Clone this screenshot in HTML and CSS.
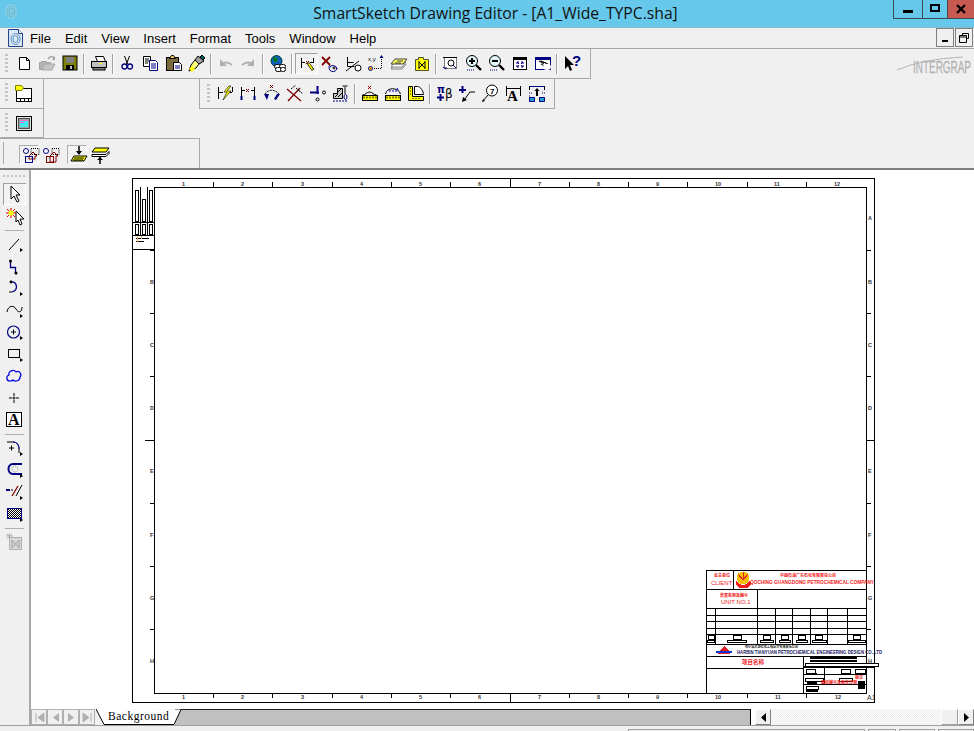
FILE: index.html
```html
<!DOCTYPE html>
<html lang="en">
<head>
<meta charset="utf-8">
<title>SmartSketch Drawing Editor</title>
<link rel="stylesheet" href="styles.css">
</head>
<body>
<div class="app">
  <header class="titlebar">
    <svg class="title-icon" width="14" height="17" viewBox="0 0 14 17"><ellipse cx="7" cy="8.5" rx="6" ry="7.5" fill="#8fd0e4"/><ellipse cx="7" cy="8.5" rx="4" ry="5.5" fill="none" stroke="#5fb4d0"/><ellipse cx="7" cy="8.5" rx="2" ry="3.5" fill="none" stroke="#5fb4d0"/></svg>
    <div class="title-text">SmartSketch Drawing Editor - [A1_Wide_TYPC.sha]</div>
    <div class="win-controls">
      <div class="win-btn win-min"><svg width="12" height="12" viewBox="0 0 12 12"><rect x="1" y="7" width="10" height="3" fill="#000"/></svg></div>
      <div class="win-btn win-max"><svg width="12" height="12" viewBox="0 0 12 12"><rect x="2" y="2" width="8" height="6" fill="none" stroke="#000" stroke-width="2"/></svg></div>
      <div class="win-btn win-close"><svg width="12" height="12" viewBox="0 0 12 12"><path d="M2 2l8 8M10 2l-8 8" stroke="#000" stroke-width="2.4"/></svg></div>
    </div>
  </header>

  <nav class="menubar">
    <svg class="menu-icon" width="15" height="18" viewBox="0 0 15 18"><path d="M.5.5h10l4 4v13H.5z" fill="#dbe9f5" stroke="#1f3f8f"/><path d="M10.500.5v4h4" fill="#fff" stroke="#1f3f8f"/><ellipse cx="7.500" cy="10" rx="4.500" ry="5.500" fill="none" stroke="#5c8fc0"/><ellipse cx="7.500" cy="10" rx="2.500" ry="3.500" fill="none" stroke="#5c8fc0"/></svg>
    <span class="menu-item">File</span>
    <span class="menu-item">Edit</span>
    <span class="menu-item">View</span>
    <span class="menu-item">Insert</span>
    <span class="menu-item">Format</span>
    <span class="menu-item">Tools</span>
    <span class="menu-item">Window</span>
    <span class="menu-item">Help</span>
    <div class="mdi-controls">
      <div class="mdi-btn"><svg width="10" height="10" viewBox="0 0 10 10"><rect x="2" y="7" width="6" height="2" fill="#000"/></svg></div>
      <div class="mdi-btn"><svg width="12" height="12" viewBox="0 0 12 12"><path d="M4.500 3.500v-2h6v5h-2M1.500 3.500h7v7h-7zM1.500 5h7" fill="none" stroke="#000"/></svg></div>
    </div>
  </nav>

  <section class="dock">
    <div class="dock-row row-one">
      <div class="toolbar tb-main">
        <i class="gripper"></i>
        <div class="tool"><svg class="ic" viewBox="0 0 21 21"><path d="M6.500 4.500h7l3 3v9h-10z" fill="#fff" stroke="#000"/><path d="M13.500 4.500v3h3" fill="none" stroke="#000"/></svg></div>
        <div class="tool"><svg class="ic" viewBox="0 0 21 21"><path d="M3.500 9.500h2v-1h5v1h4v7h-11z" fill="#b4b4b4" stroke="#a0a0a0"/><path d="M6 17l3-6h10l-3 6z" fill="#c4c4c4" stroke="#a8a8a8"/><path d="M12 6c2-3 4-3 6-1" fill="none" stroke="#a0a0a0" stroke-width="1.500"/><path d="M19 3v4h-3z" fill="#a0a0a0"/></svg></div>
        <div class="tool"><svg class="ic" viewBox="0 0 21 21"><rect x="4" y="3" width="14" height="14" fill="#808000" stroke="#000"/><rect x="7" y="4" width="8" height="6" fill="#808080"/><rect x="7" y="12" width="8" height="5" fill="#000"/><rect x="11" y="13" width="2" height="3" fill="#c0c0c0"/></svg></div>
        <i class="tool-sep"></i>
        <div class="tool"><svg class="ic" viewBox="0 0 21 21"><path d="M7.500 3.500h8l2 5h-8z" fill="#fff" stroke="#000"/><rect x="3.500" y="8.500" width="15" height="6" fill="#c0c0c0" stroke="#000"/><rect x="5" y="14.500" width="12" height="2.500" fill="#808080" stroke="#000"/><rect x="11" y="10" width="3" height="1" fill="#ff0"/></svg></div>
        <i class="tool-sep"></i>
        <div class="tool"><svg class="ic" viewBox="0 0 21 21"><path d="M7.500 3l3 8M12.500 3l-3 8" stroke="#000" fill="none"/><circle cx="7.500" cy="13.500" r="2.500" fill="none" stroke="#000080" stroke-width="1.300"/><circle cx="13" cy="13.500" r="2.500" fill="none" stroke="#000080" stroke-width="1.300"/></svg></div>
        <div class="tool"><svg class="ic" viewBox="0 0 21 21"><path d="M3.500 3.500h7v10h-7z" fill="#fff" stroke="#000"/><path d="M5 6h4M5 8h4M5 10h3" stroke="#000"/><path d="M9.500 7.500h6l2 2v8h-8z" fill="#fff" stroke="#000080"/><path d="M11 11h5M11 13h5M11 15h5" stroke="#000080"/></svg></div>
        <div class="tool"><svg class="ic" viewBox="0 0 21 21"><rect x="3.500" y="4.500" width="12" height="13" fill="#7a6c3c" stroke="#000"/><path d="M6.500 5.500l2-3h2l2 3z" fill="#f0d060" stroke="#000"/><path d="M10.500 9.500h6l2 2v6h-8z" fill="#fff" stroke="#000"/><path d="M12 13h5M12 15h5" stroke="#000080"/></svg></div>
        <div class="tool"><svg class="ic" viewBox="0 0 21 21"><path d="M12 3l6 5-5 3-4-4z" fill="#a0a0a0" stroke="#000"/><path d="M16 2l3 3-2 2-3-3z" fill="#006060" stroke="#000"/><path d="M9 7l4 4-3 4-7 3 2-6z" fill="#ffff80" stroke="#000"/><path d="M3 16l3 3 3-3-3-3z" fill="#ff0"/></svg></div>
        <i class="tool-sep"></i>
        <div class="tool"><svg class="ic" viewBox="0 0 21 21"><path d="M6 13c2-4 6-5 11-1" fill="none" stroke="#b0b0b0" stroke-width="2"/><path d="M5 6v7h7z" fill="#b0b0b0"/></svg></div>
        <div class="tool"><svg class="ic" viewBox="0 0 21 21"><path d="M15 13c-2-4-6-5-11-1" fill="none" stroke="#b0b0b0" stroke-width="2"/><path d="M16 6v7H9z" fill="#b0b0b0"/></svg></div>
        <i class="tool-sep"></i>
        <div class="tool"><svg class="ic" viewBox="0 0 21 21"><circle cx="9.500" cy="8" r="5.500" fill="#1060c0" stroke="#004040"/><path d="M6 5l3-1 2 3-3 3z" fill="#008000"/><rect x="7.500" y="11.500" width="6" height="4" rx="2" fill="#fff" stroke="#000"/><rect x="12.500" y="11.500" width="6" height="4" rx="2" fill="#fff" stroke="#000"/><rect x="8.500" y="14.500" width="6" height="4" rx="2" fill="#fff" stroke="#000"/><rect x="13.500" y="14.500" width="5" height="4" rx="2" fill="#fff" stroke="#000"/></svg></div>
        <i class="tool-sep"></i>
        <div class="tool tool-on"><svg class="ic" viewBox="0 0 21 21"><path d="M5.500 5v10M17.500 5v5M6 9.500h3M14 9.500h3" stroke="#000" fill="none"/><path d="M10 8l3 3M13 8l-3 3" stroke="#800000"/><path d="M12 10l5 7" stroke="#000" stroke-width="3"/><path d="M12.500 10.500l4 6" stroke="#ff0" stroke-width="1.500"/></svg></div>
        <div class="tool"><svg class="ic" viewBox="0 0 21 21"><path d="M3 4l8 8M11 4l-8 8" stroke="#800000" stroke-width="1.800"/><path d="M11 12a4 4 0 1 0 7 3M18 16a4 4 0 0 0-7-2" fill="none" stroke="#000080"/><path d="M13.500 15h3M15 13.500v3" stroke="#000"/></svg></div>
        <div class="tool"><svg class="ic" viewBox="0 0 21 21"><path d="M5.500 4v9.500h7" fill="none" stroke="#000"/><path d="M5.500 9.500h6" fill="none" stroke="#000"/><path d="M4 18L17 8" stroke="#000"/><circle cx="16" cy="15" r="3" fill="#fff" stroke="#000"/></svg></div>
        <div class="tool"><svg class="ic" viewBox="0 0 21 21"><text class="ic-mini" x="3" y="8">x,y</text><path d="M16.500 4v11" stroke="#000" stroke-dasharray="1 1"/><path d="M9 15.500h7" stroke="#000" stroke-dasharray="1 1"/><path d="M14.500 5l2-3 2 3z" fill="#000080"/><circle cx="5.500" cy="15.500" r="2" fill="#ff0" stroke="#000080"/><circle cx="5.500" cy="15.500" r=".8" fill="#c00"/></svg></div>
        <div class="tool"><svg class="ic" viewBox="0 0 21 21"><path d="M3 16l4-5h11l-4 5z" fill="none" stroke="#808080"/><path d="M3 14l4-5h11l-4 5z" fill="#fff" stroke="#808080"/><path d="M3 11l4-5h12l-4 5z" fill="#ffff60" stroke="#404040"/><path d="M9 8h6M7 10h6" stroke="#404040"/></svg></div>
        <div class="tool"><svg class="ic" viewBox="0 0 21 21"><path d="M4.500 6.500h3v-2h5v2h5v11h-13z" fill="#ff0" stroke="#505020"/><path d="M8 9l6 6M14 9l-6 6M8 8v8M14 8v8" stroke="#000" fill="none"/></svg></div>
        <i class="tool-sep"></i>
        <div class="tool"><svg class="ic" viewBox="0 0 21 21"><path d="M4.500 4.500h12v11h-12z" fill="#fff" stroke="#000" stroke-dasharray="1 1"/><path d="M3 4.500h14" stroke="#000"/><circle cx="11" cy="10" r="3" fill="none" stroke="#000"/><path d="M13 12l3 3M3 14l3 2 0-2" stroke="#000080" fill="none"/></svg></div>
        <div class="tool"><svg class="ic" viewBox="0 0 21 21"><circle cx="9" cy="8" r="5.500" fill="#e0f8f8" stroke="#000"/><path d="M6 8h6M9 5v6" stroke="#000" stroke-width="2"/><path d="M13 12l5 5" stroke="#000" stroke-width="2.400"/><path d="M4 17h8" stroke="#000080" stroke-dasharray="1 1"/></svg></div>
        <div class="tool"><svg class="ic" viewBox="0 0 21 21"><circle cx="9" cy="8" r="5.500" fill="#e0f8f8" stroke="#000"/><path d="M6 8h6" stroke="#000" stroke-width="2"/><path d="M13 12l5 5" stroke="#000" stroke-width="2.400"/><path d="M4 17h8" stroke="#000080" stroke-dasharray="1 1"/></svg></div>
        <div class="tool"><svg class="ic" viewBox="0 0 21 21"><rect x="4.500" y="4.500" width="13" height="12" fill="#fff" stroke="#000"/><path d="M4.500 6h13" stroke="#000" stroke-width="2"/><path d="M8 9l2 2M14 9l-2 2M8 14l2-2M14 14l-2-2M8 9h2M8 9v2M14 9h-2M14 9v2M8 14h2M8 14v-2M14 14h-2M14 14v-2" stroke="#000080"/></svg></div>
        <div class="tool"><svg class="ic" viewBox="0 0 21 21"><rect x="3.500" y="4.500" width="15" height="12" fill="#fff" stroke="#000080"/><path d="M3.500 6h15" stroke="#000080" stroke-width="2"/><path d="M7 8l5 3M8 8l6 2M9 8l7 3M9 11l5 3" stroke="#000"/><ellipse cx="15" cy="14" rx="4" ry="3" fill="#fff"/></svg></div>
        <i class="tool-sep"></i>
        <div class="tool"><svg class="ic" viewBox="0 0 21 21"><path d="M4 3v13l3-3 2 5 2-1-2-5h4z" fill="#000"/><text class="ic-q" x="11" y="13">?</text></svg></div>
      </div>
      <svg class="brand" width="77" height="20" viewBox="0 0 77 20"><path d="M0 15Q25 4 66 2" fill="none" stroke="#b4b4b4"/><text class="brand-text" x="16" y="18" textLength="58" lengthAdjust="spacingAndGlyphs">INTERGRAP</text></svg>
    </div>

    <div class="dock-row row-two">
      <div class="toolbar tb-stub">
        <i class="gripper"></i>
        <div class="tool"><svg class="ic" viewBox="0 0 21 21"><rect x="3.500" y="5.500" width="15" height="13" fill="#fff" stroke="#000"/><path d="M3.500 15.500h15M7.500 15.500v3M11.500 15.500v3M15.500 15.500v3" stroke="#000"/><path d="M2.500 2.500h6l2 2.500-2 2.500h-6z" fill="#ff0" stroke="#808000"/></svg></div>
      </div>
      <div class="toolbar tb-dim">
        <i class="gripper"></i>
        <div class="tool"><svg class="ic" viewBox="0 0 21 21"><path d="M3.500 4v12M17.500 4v5M4 9.500h4M13 9.500h4" stroke="#000" fill="none"/><path d="M14 3l-5 6h3l-4 8 8-9h-4l4-5z" fill="#ff0" stroke="#000" stroke-width=".6"/></svg></div>
        <div class="tool"><svg class="ic" viewBox="0 0 21 21"><path d="M3.500 4v9M16.500 4v9M4 7.500h3M13 7.500h3" stroke="#000"/><path d="M8 6l3 3M11 6l-3 3" stroke="#800000"/><path d="M3.500 13v4M16.500 13v4" stroke="#000080" stroke-width="2"/></svg></div>
        <div class="tool"><svg class="ic" viewBox="0 0 21 21"><path d="M4 11c3-5 10-5 14 0" fill="none" stroke="#000" stroke-dasharray="2 1"/><path d="M3 11l3 6 2-6zM13 16l2 1 4-6h-3z" fill="#000080"/><path d="M9 5l3-3M9 2l3 3" stroke="#800000"/></svg></div>
        <div class="tool"><svg class="ic" viewBox="0 0 21 21"><path d="M3 6l14 12M16 5L4 18" stroke="#800000" stroke-width="1.300"/><path d="M7 6l5-4M12 5l7 6M14 6l2 3" stroke="#000" stroke-dasharray="2 1"/></svg></div>
        <div class="tool"><svg class="ic" viewBox="0 0 21 21"><path d="M3 9.500h9M10.500 3v8" stroke="#000080" stroke-width="2"/><circle cx="17" cy="9.500" r="1.500" fill="none" stroke="#000"/><circle cx="10.500" cy="16.500" r="1.500" fill="none" stroke="#000"/></svg></div>
        <div class="tool"><svg class="ic" viewBox="0 0 21 21"><path d="M3.500 15.500v-5h4v-5h5v10z" fill="#c8c8c8" stroke="#000"/><path d="M5 14l3-3M8 14l4-4M7 10l4-4" stroke="#000"/><path d="M12.500 3h5M15 4v7" stroke="#000"/><path d="M3 18h14" stroke="#000080" stroke-dasharray="2 1"/><ellipse cx="15.500" cy="14" rx="1.500" ry="2.500" fill="none" stroke="#000080"/></svg></div>
        <i class="tool-sep"></i>
        <div class="tool"><svg class="ic" viewBox="0 0 21 21"><rect x="3.500" y="12.500" width="15" height="5" fill="#ff0" stroke="#000"/><path d="M5 13.500v2M8 13.500v2M11 13.500v2M14 13.500v2M17 13.500v2" stroke="#000"/><path d="M3.500 12c3 0 4-3 7-3s4 3 7 3" fill="none" stroke="#000"/><path d="M9 3l3 3M12 3l-3 3" stroke="#c00000"/></svg></div>
        <div class="tool"><svg class="ic" viewBox="0 0 21 21"><rect x="3.500" y="12.500" width="15" height="5" fill="#ff0" stroke="#000"/><path d="M5 13.500v2M8 13.500v2M11 13.500v2M14 13.500v2M17 13.500v2" stroke="#000"/><path d="M3.500 11c1-7 13-7 15 0" fill="none" stroke="#000"/><path d="M7 8h9M15 5l2 3" stroke="#0000c0" stroke-dasharray="2 1"/></svg></div>
        <div class="tool"><svg class="ic" viewBox="0 0 21 21"><path d="M3.500 3.500h4v10h11v4h-15z" fill="#ff0" stroke="#000"/><path d="M5 5h1M5 8h1M5 11h1M8 15v1M11 15v1M14 15v1" stroke="#000"/><path d="M9.500 11.500v-8h3c3 0 6 5 6 8z" fill="#fff" stroke="#000"/></svg></div>
        <i class="tool-sep"></i>
        <div class="tool"><svg class="ic" viewBox="0 0 21 21"><text class="ic-pi" x="3" y="10">π</text><text class="ic-beta" x="11" y="15">β</text><path d="M3 14.500h7M6.500 11v7" stroke="#000080" stroke-width="2"/></svg></div>
        <div class="tool"><svg class="ic" viewBox="0 0 21 21"><path d="M2 7h7M5.500 3v7" stroke="#000080" stroke-width="2"/><path d="M18 9h-5l-6 8" fill="none" stroke="#000"/><path d="M5 19l1-5 4 3z" fill="#000"/></svg></div>
        <div class="tool"><svg class="ic" viewBox="0 0 21 21"><circle cx="12" cy="7.500" r="5.500" fill="#fff" stroke="#000"/><text class="ic-seven" x="10" y="10.500">7</text><path d="M8 12l-5 6" stroke="#000"/><path d="M2 19l1-3 2 2z" fill="#000"/></svg></div>
        <div class="tool"><svg class="ic" viewBox="0 0 21 21"><path d="M3.500 3v10M17.500 3v10M4 5.500h13" stroke="#000"/><text class="ic-a" x="4" y="18">A</text></svg></div>
        <div class="tool"><svg class="ic" viewBox="0 0 21 21"><path d="M3 3.500h16" stroke="#000080"/><path d="M3.500 3v4M18.500 3v4" stroke="#000"/><path d="M3 10h3M3 13h2M16 10h3" stroke="#000080" stroke-dasharray="1 1"/><path d="M3.500 14.500h5v4h-5zM13.500 14.500h5v4h-5z" fill="#20a0d0" stroke="#000080"/><path d="M11 6v7" stroke="#000" stroke-width="2"/><path d="M8.500 8l2.500-3 2.500 3z" fill="#000"/></svg></div>
      </div>
    </div>

    <div class="dock-row row-three">
      <div class="toolbar tb-stub">
        <i class="gripper"></i>
        <div class="tool"><svg class="ic" viewBox="0 0 21 21"><rect x="3.500" y="3.500" width="15" height="14" fill="#e0e0e0" stroke="#000"/><rect x="5.500" y="5.500" width="11" height="10" fill="#a0a0a0" stroke="#505050"/><rect x="7" y="7" width="8" height="7" fill="#40e8f0"/><path d="M7 7.500h8M7 9.500h4" stroke="#ff60d0"/></svg></div>
      </div>
    </div>

    <div class="dock-row row-four">
      <div class="toolbar tb-layers">
        <i class="bar-grip"></i>
        <div class="layer-on"><svg class="ic" viewBox="0 0 21 21"><path d="M11 3.500h8v6h-8z" fill="none" stroke="#000" stroke-dasharray="1 1"/><circle cx="6" cy="6" r="2.500" fill="#fff" stroke="#000080"/><path d="M9 11l4-4 4 4h-2v3H9z" fill="none" stroke="#800000"/><rect x="5.500" y="11.500" width="7" height="6" fill="none" stroke="#000080"/></svg></div>
        <div class="layer-off"><svg class="ic" viewBox="0 0 21 21"><path d="M11 3.500h7v6h-7z" fill="none" stroke="#000" stroke-dasharray="1 1"/><circle cx="5" cy="6" r="2.500" fill="#fff" stroke="#000080"/><path d="M9 11l4-4 4 4h-2v6H9z" fill="none" stroke="#800000"/><rect x="5.500" y="11.500" width="7" height="6" fill="none" stroke="#800000"/></svg></div>
        <div class="layer-on"><svg class="ic" viewBox="0 0 21 21"><path d="M3 16l3-5h13l-3 5z" fill="#ff0" stroke="#000"/><path d="M6 13h10M5 15h10" stroke="#000"/><path d="M11 1v7" stroke="#000" stroke-width="1.500"/><path d="M8 6h6l-3 4z" fill="#000"/></svg></div>
        <div class="layer-off"><svg class="ic" viewBox="0 0 21 21"><path d="M3 7l3-4h14l-3 4z" fill="#ff0" stroke="#000"/><path d="M3 9.500h14l3-3v2l-3 3H3z" fill="#fff" stroke="#000"/><path d="M11 12v7" stroke="#000" stroke-width="1.500"/><path d="M8 15l3-3 3 3z" fill="#000"/></svg></div>
      </div>
    </div>
  </section>

  <main class="workspace">
    <aside class="sidebar">
      <i class="side-grip"></i>
      <div class="side-tool side-on"><svg class="sic" viewBox="0 0 23 22"><path d="M8 3v13l3-3 3 6 2-1-3-6h4z" fill="#fff" stroke="#000"/></svg></div>
      <div class="side-tool"><svg class="sic" viewBox="0 0 23 22"><path d="M13 6v11l2-2 2 5 2-1-2-5h4z" fill="#fff" stroke="#000"/><path d="M3 8h10M8 3v10M4 4l8 8M12 4l-8 8" stroke="#e00000"/><circle cx="8" cy="8" r="2.500" fill="#ff0"/></svg></div>
      <i class="side-sep"></i>
      <div class="side-tool"><svg class="sic" viewBox="0 0 23 22"><path d="M6 17L16 6" stroke="#000"/><path class="fly" d="M17 15l3 2-3 2z"/></svg></div>
      <div class="side-tool"><svg class="sic" viewBox="0 0 23 22"><path d="M7.500 7v5.500h5V18" fill="none" stroke="#000080" stroke-width="1.300"/><circle cx="7.500" cy="6" r="1.500"/><circle cx="13" cy="18" r="1.500"/></svg></div>
      <div class="side-tool"><svg class="sic" viewBox="0 0 23 22"><path d="M8 5c6-1 8 8 1 10" fill="none" stroke="#000080" stroke-width="1.300"/><circle cx="8" cy="5" r="1.400"/><path d="M6 15h3" stroke="#000"/><path class="fly" d="M17 15l3 2-3 2z"/></svg></div>
      <div class="side-tool"><svg class="sic" viewBox="0 0 23 22"><path d="M4 13c1-7 7-7 9-3s6 4 6-2" fill="none" stroke="#000"/><path class="fly" d="M17 15l3 2-3 2z"/></svg></div>
      <div class="side-tool"><svg class="sic" viewBox="0 0 23 22"><circle cx="10.500" cy="11" r="6" fill="none" stroke="#000080" stroke-width="1.200"/><path d="M8 11h5M10.500 8.500v5" stroke="#000"/><path class="fly" d="M17 15l3 2-3 2z"/></svg></div>
      <div class="side-tool"><svg class="sic" viewBox="0 0 23 22"><rect x="5.500" y="6.500" width="11" height="8" fill="none" stroke="#000"/><path class="fly" d="M17 15l3 2-3 2z"/></svg></div>
      <div class="side-tool"><svg class="sic" viewBox="0 0 23 22"><path d="M7 16c-4 0-4-5-1-6-1-4 5-6 7-3 4-2 6 3 4 5 0 4-5 5-7 3-1 1-2 1-3 1z" fill="none" stroke="#0000e0" stroke-width="1.200"/></svg></div>
      <div class="side-tool"><svg class="sic" viewBox="0 0 23 22"><path d="M6 11h3M13 11h3M11 6v3M11 13v3" stroke="#000"/><circle cx="11" cy="11" r="1" fill="none" stroke="#000"/></svg></div>
      <div class="side-tool"><svg class="sic" viewBox="0 0 23 22"><rect x="3.500" y="3.500" width="15" height="14" fill="#fff" stroke="#000"/><text class="ic-abig" x="5" y="16">A</text></svg></div>
      <i class="side-sep"></i>
      <div class="side-tool"><svg class="sic" viewBox="0 0 23 22"><path d="M4 5h6c4 0 6 3 6 7v4" fill="none" stroke="#000"/><path d="M10 5c4 0 6 3 6 7" fill="none" stroke="#0000c0"/><path d="M6 11h5M8.500 8.500v5" stroke="#000"/><path class="fly" d="M17 15l3 2-3 2z"/></svg></div>
      <div class="side-tool"><svg class="sic" viewBox="0 0 23 22"><path d="M19 5h-9C4 5 4 15 10 15h9" fill="none" stroke="#000080" stroke-width="2"/><circle cx="12" cy="10" r="3" fill="none" stroke="#909090" stroke-dasharray="1 1"/><path class="fly" d="M17 15l3 2-3 2z"/></svg></div>
      <div class="side-tool"><svg class="sic" viewBox="0 0 23 22"><path d="M3 9h4" stroke="#000080" stroke-width="2"/><path d="M9 8v2" stroke="#000"/><path d="M9 15l6-10" stroke="#800000" stroke-width="1.300"/><path d="M13 15l6-11" stroke="#000"/><path class="fly" d="M17 15l3 2-3 2z"/></svg></div>
      <div class="side-tool"><svg class="sic" viewBox="0 0 23 22"><rect x="4.500" y="5.500" width="14" height="10" fill="#fff" stroke="#000080"/><path class="hatch" d="M5 6.500h13M5 8.500h13M5 10.500h13M5 12.500h13M5 14.500h13"/><path class="hatch" d="M6 7.500h12M6 9.500h12M6 11.500h12M6 13.500h12"/><path class="fly" d="M17 15l3 2-3 2z"/></svg></div>
      <i class="side-sep"></i>
      <div class="side-tool"><svg class="sic" viewBox="0 0 23 22"><path d="M3 5h7M6.500 2v6M4 3l5 5M9 3l-5 5" stroke="#b0b0b0"/><rect x="6.500" y="6.500" width="12" height="12" fill="#d8d8d8" stroke="#b0b0b0"/><path d="M9 9l7 8M16 9l-7 8M9 9v8M16 9v8" stroke="#a0a0a0"/></svg></div>
    </aside>

    <div class="canvas">
      <svg class="sheet" viewBox="31 170 943 539" width="943" height="539">
        <rect class="ln" x="132.500" y="178.500" width="742" height="524"/>
        <rect class="ln" x="154.500" y="187.500" width="712" height="506"/>
        <!-- border ticks -->
        <path class="ln" d="M213.500 182v5M272.500 182v5M332.500 182v5M391.500 182v5M450.500 182v5M510.500 178v9M569.500 182v5M628.500 182v5M687.500 182v5M747.500 182v5M806.500 182v5"/>
        <path class="ln" d="M213.500 694v4M272.500 694v4M332.500 694v4M391.500 694v4M450.500 694v4M510.500 694v9M569.500 694v4M628.500 694v4M687.500 694v4M747.500 694v4M806.500 694v4"/>
        <path class="ln" d="M150 250.500h4M150 313.500h4M150 376.500h4M145 440.500h9M150 503.500h4M150 566.500h4M150 629.500h4"/>
        <path class="ln" d="M867 250.500h4M867 313.500h4M867 376.500h4M867 440.500h8M867 503.500h4M867 566.500h4M867 629.500h4"/>
        <g class="ruler">
          <text x="182" y="186">1</text><text x="241" y="186">2</text><text x="301" y="186">3</text><text x="360" y="186">4</text><text x="419" y="186">5</text><text x="478" y="186">6</text><text x="538" y="186">7</text><text x="597" y="186">8</text><text x="656" y="186">9</text><text x="715" y="186">10</text><text x="774" y="186">11</text><text x="834" y="186">12</text>
          <text x="182" y="699">1</text><text x="241" y="699">2</text><text x="301" y="699">3</text><text x="360" y="699">4</text><text x="419" y="699">5</text><text x="478" y="699">6</text><text x="538" y="699">7</text><text x="597" y="699">8</text><text x="656" y="699">9</text><text x="715" y="699">10</text><text x="775" y="699">11</text><text x="835" y="699">12</text>
          <text x="150" y="284">B</text><text x="150" y="347">C</text><text x="150" y="410">D</text><text x="150" y="473">E</text><text x="150" y="537">F</text><text x="150" y="600">G</text><text x="150" y="663">H</text>
          <text x="868" y="220">A</text><text x="868" y="284">B</text><text x="868" y="347">C</text><text x="868" y="410">D</text><text x="868" y="473">E</text><text x="868" y="537">F</text><text x="868" y="600">G</text><text x="868" y="663">H</text>
          <text class="ruler-big" x="867" y="700">A1</text>
        </g>

        <!-- revision block, top left -->
        <g class="ln">
          <path d="M133 222.500h21M133 235.500h21M133 249.500h21M140.500 187v48M147.500 187v48"/>
          <rect x="135.500" y="190.500" width="3" height="31"/><rect x="142.500" y="199.500" width="3" height="22"/><rect x="149.500" y="190.500" width="3" height="31"/>
          <rect x="135.500" y="224.500" width="3" height="10"/><rect x="142.500" y="224.500" width="3" height="10"/><rect x="149.500" y="224.500" width="3" height="10"/>
          <path d="M136 238.500h13M136 241.500h8"/>
          <path class="ln-amber" d="M137.500 236v6M141.500 236v3"/>
        </g>

        <!-- title block, bottom right -->
        <g class="ln">
          <path d="M706.500 570.500h160M706.500 570v123M706.500 589.500h160M733.500 570v19M706.500 608.500h160M757.500 589v55M706.500 615.500h160M706.500 621.500h160M706.500 628.500h160M706.500 634.500h160M706.500 644.500h160M706.500 656.500h160M706.500 668.500h97M803.500 656v37"/>
          <path d="M715.500 608v36M775.500 608v36M792.500 608v36M810.500 608v36M827.500 608v36M847.500 608v36"/>
          <rect x="708.500" y="635.500" width="6" height="4"/><rect x="707.500" y="640.500" width="7" height="2"/>
          <rect x="733.500" y="635.500" width="8" height="4"/><rect x="727.500" y="640.500" width="19" height="2"/>
          <rect x="763.500" y="635.500" width="7" height="4"/><rect x="760.500" y="640.500" width="13" height="2"/>
          <rect x="781.500" y="635.500" width="7" height="4"/><rect x="779.500" y="640.500" width="11" height="2"/>
          <rect x="798.500" y="635.500" width="7" height="4"/><rect x="796.500" y="640.500" width="11" height="2"/>
          <rect x="815.500" y="635.500" width="7" height="4"/><rect x="812.500" y="640.500" width="14" height="2"/>
          <rect x="853.500" y="635.500" width="7" height="4"/><rect x="848.500" y="640.500" width="17" height="2"/>
        </g>
        <g class="tb-black">
          <rect x="810" y="657" width="47" height="2"/><rect x="810" y="660" width="47" height="2"/>
          <rect x="805" y="663" width="73" height="3" class="tb-hollow"/><rect x="804" y="666" width="71" height="2"/>
          <rect x="806" y="669" width="9" height="4" class="tb-hollow"/><rect x="807" y="673" width="10" height="2"/><rect x="805" y="678" width="18" height="3" class="tb-hollow"/><rect x="807" y="682" width="10" height="2"/><rect x="806" y="686" width="12" height="3" class="tb-hollow"/><rect x="806" y="690" width="12" height="2"/>
          <rect x="841" y="669" width="9" height="4" class="tb-hollow"/><rect x="855" y="669" width="10" height="4" class="tb-hollow"/><rect x="839" y="678" width="13" height="3" class="tb-hollow"/><rect x="858" y="681" width="7" height="8"/>
        </g>
        <path class="ln" d="M804 674.500h62M804 684.500h62M824 668v16"/>
        <g>
          <text class="tb-red tb-cn" x="714" y="577">业主单位</text>
          <text class="tb-red tb-en" x="711" y="585">CLIENT</text>
          <text class="tb-red tb-cn" x="780" y="577">中国石油广东石化有限责任公司</text>
          <text class="tb-red tb-co" x="750" y="584" textLength="124" lengthAdjust="spacingAndGlyphs">QOCHING GUANGDONG PETROCHEMICAL COMPANY</text>
          <text class="tb-red tb-cn" x="720" y="597">装置名称及编号</text>
          <text class="tb-red tb-en" x="721" y="604">UNIT NO.1</text>
          <text class="tb-dark tb-cn" x="745" y="648" textLength="53" lengthAdjust="spacingAndGlyphs">哈尔滨天源石化工程设计有限责任公司</text>
          <text class="tb-navy tb-co2" x="737" y="654" textLength="145" lengthAdjust="spacingAndGlyphs">HARBIN TIANYUAN PETROCHEMICAL ENGINEERING DESIGN CO.,LTD</text>
          <text class="tb-red tb-cn2" x="742" y="664">项目名称</text>
          <text class="tb-red tb-cn" x="821" y="684">图纸编号及版次日期</text>
          <text class="tb-red tb-cn" x="855" y="679">版次</text>
        </g>
        <circle cx="743" cy="578" r="6.500" fill="#f4c000"/>
        <path d="M736 580a7.500 7.500 0 0 0 14 0l1 4-3 4h-9l-3-4z" fill="#f02020"/>
        <path d="M743 572v8M738 574l5 6M748 574l-5 6" stroke="#e02020"/>
        <path d="M724 646l5 5h3l-2 3h-12l-2-3h3z" fill="#e02020"/>
        <path d="M716 651h16v2h-16z" fill="#1030d0"/>
      </svg>
    </div>
  </main>

  <footer class="tabstrip">
    <div class="tab-spacer"></div>
    <div class="tab-nav"><svg width="15" height="15" viewBox="0 0 15 15"><path d="M4 3v9M12 3L6 7.500l6 4.500z" fill="#b0b0b0" stroke="#b0b0b0"/></svg></div>
    <div class="tab-nav"><svg width="15" height="15" viewBox="0 0 15 15"><path d="M11 3L5 7.500l6 4.500z" fill="#b0b0b0"/></svg></div>
    <div class="tab-nav"><svg width="15" height="15" viewBox="0 0 15 15"><path d="M4 3l6 4.500L4 12z" fill="#b0b0b0"/></svg></div>
    <div class="tab-nav"><svg width="15" height="15" viewBox="0 0 15 15"><path d="M3 3l6 4.500L3 12zM11 3v9" fill="#b0b0b0" stroke="#b0b0b0"/></svg></div>
    <div class="tab-area">
      <svg class="tab-shape" width="90" height="17" viewBox="0 0 90 17"><path d="M0 0L8 15.500h70L85 .5" fill="#fff" stroke="#000"/></svg>
      <span class="tab-label">Background</span>
    </div>
    <div class="tab-fill"></div>
    <div class="tab-split"></div>
    <div class="sb-btn"><svg width="15" height="15" viewBox="0 0 15 15"><path d="M10 3L5 7.500l5 4.500z" fill="#000"/></svg></div>
    <div class="sb-track"><div class="sb-thumb"></div></div>
    <div class="sb-btn"><svg width="15" height="15" viewBox="0 0 15 15"><path d="M5 3l5 4.500L5 12z" fill="#000"/></svg></div>
  </footer>

  <div class="statusbar">
    <div class="st-panel st-a"></div>
    <div class="st-panel st-b"></div>
    <div class="st-panel st-c"></div>
    <div class="st-panel st-d"></div>
  </div>
</div>
</body>
</html>
```

FILE: styles.css
```css
* { box-sizing: border-box; }
html, body { margin: 0; padding: 0; height: 100%; overflow: hidden; background: #f0f0f0; }
svg { display: block; }
i { display: block; }

.app {
  width: 974px;
  height: 731px;
  display: flex;
  flex-direction: column;
  overflow: hidden;
  font-family: "Liberation Sans", Arial, sans-serif;
}

/* title bar */
.titlebar {
  height: 28px;
  flex: none;
  display: flex;
  background: #66c8ea;
  border-bottom: 1px solid #86bdd2;
}
.title-icon { margin: 3px 0 0 3px; flex: none; opacity: .9; width: 16px; }
.title-text {
  flex: 1;
  margin-right: -81px;
  padding-right: 2px;
  text-align: center;
  font: 15.700px/26px "Open Sans", "Noto Sans", sans-serif;
  color: #111;
  white-space: nowrap;
}
.win-controls { display: flex; height: 19px; flex: none; border-bottom: 1px solid #3c4a50; position: relative; }
.win-btn { display: flex; align-items: center; justify-content: center; }
.win-min { width: 29px; border-left: 1px solid #3c4a50; }
.win-max { width: 26px; border-left: 1px solid #3c4a50; border-right: 1px solid #3c4a50; }
.win-close { width: 26px; background: #c75a50; }

/* menu */
.menubar {
  height: 21px;
  flex: none;
  display: flex;
  align-items: center;
  border-bottom: 1px solid #a6a6a6;
  background: #f0f0f0;
  font-size: 13px;
  color: #000;
}
.menu-icon { margin-left: 8px; flex: none; }
.menu-item { margin: 0 7px; line-height: 18px; padding-top: 1px; }
.menu-item:first-of-type { margin-left: 7px; }
.mdi-controls { display: flex; margin-left: auto; gap: 1px; padding-right: 1px; align-self: flex-start; }
.mdi-btn {
  width: 18px; height: 19px;
  border: 1px solid #808080;
  display: flex; align-items: center; justify-content: center;
}

/* dock */
.dock { flex: none; display: flex; flex-direction: column; }
.dock-row { display: flex; flex: none; }
.row-one { height: 30px; }
.row-two { height: 30px; }
.row-three { height: 29px; }
.row-four { height: 30px; }

.toolbar { display: flex; align-items: center; }
.tb-main { width: 591px; height: 30px; padding-left: 5px; border-right: 1px solid #a8a8a8; border-bottom: 1px solid #a8a8a8; }
.tb-stub {
  width: 44px;
  height: 100%;
  padding: 4px 0 0 5px;
  align-items: flex-start;
  border-right: 1px solid #a8a8a8;
  border-bottom: 1px solid #a8a8a8;
}
.tb-dim {
  margin-left: 155px;
  width: 356px;
  height: 30px;
  padding-left: 7px;
  border-left: 1px solid #a8a8a8;
  border-right: 1px solid #a8a8a8;
  border-bottom: 1px solid #a8a8a8;
}
.tb-layers {
  width: 200px;
  height: 30px;
  padding: 6px 0 0 3px;
  align-items: flex-start;
  border-top: 1px solid #a8a8a8;
  border-right: 1px solid #a8a8a8;
}
.gripper {
  width: 3px;
  height: 20px;
  margin-right: 4px;
  flex: none;
  background: repeating-linear-gradient(to bottom, #c4c4c4 0 2px, transparent 2px 4px);
}
.bar-grip { width: 1px; height: 22px; margin: -3px 15px 0 0; background: #a8a8a8; flex: none; }
.tool { width: 23px; height: 21px; flex: none; padding-left: 1px; }
.tool-sep { width: 6px; height: 20px; flex: none; background: linear-gradient(to right, #a0a0a0 50%, #fff 50%) center / 2px 100% no-repeat; }
.tool-on {
  background: repeating-conic-gradient(#ffffff 0 25%, #e6e6e6 0 50%) 0 0 / 2px 2px;
  border-top: 1px solid #a0a0a0;
  border-left: 1px solid #a0a0a0;
  border-right: 1px solid #fff;
  border-bottom: 1px solid #fff;
  padding-left: 0;
}
.layer-on {
  width: 20px;
  height: 19px;
  flex: none;
  overflow: visible;
  background: repeating-conic-gradient(#ffffff 0 25%, #e6e6e6 0 50%) 0 0 / 2px 2px;
  border-top: 1px solid #b0b0b0;
  border-left: 1px solid #b0b0b0;
  border-right: 1px solid #fff;
  border-bottom: 1px solid #fff;
}
.layer-on .ic { margin-top: -1px; }
.layer-off { width: 28px; height: 19px; flex: none; padding-left: 2px; }
.ic { width: 21px; height: 21px; }
.tool-on .ic { margin-top: -1px; }
.ic-mini { font: 6px "Liberation Sans", sans-serif; fill: #000; }
.ic-q { font: bold 15px "Liberation Sans", sans-serif; fill: #000080; }
.ic-pi { font: bold 10px "DejaVu Sans", sans-serif; fill: #000080; }
.ic-beta { font: 12px "DejaVu Sans", sans-serif; fill: #000; }
.ic-seven { font: bold 8px "Liberation Sans", sans-serif; fill: #000; }
.ic-a { font: bold 15px "Liberation Serif", serif; fill: #000; }
.ic-abig { font: bold 16px "Liberation Serif", serif; fill: #000; }

.brand { margin-left: auto; margin-top: 6px; flex: none; }
.brand-text { font: 17px "Liberation Sans", sans-serif; fill: #b2b2b2; stroke: #b2b2b2; stroke-width: .3; }

/* workspace */
.workspace { flex: 1; min-height: 0; display: flex; border-top: 2px solid #7e7e7e; }
.sidebar {
  width: 31px;
  flex: none;
  display: flex;
  flex-direction: column;
  padding: 5px 0 0 3px;
  border-right: 2px solid #a8a8a8;
}
.side-grip {
  width: 22px;
  height: 2px;
  margin-bottom: 6px;
  flex: none;
  background: repeating-linear-gradient(to right, #c4c4c4 0 2px, transparent 2px 4px);
}
.side-tool { width: 23px; height: 22px; flex: none; }
.side-on {
  background: repeating-conic-gradient(#ffffff 0 25%, #e6e6e6 0 50%) 0 0 / 2px 2px;
  box-shadow: inset 1px 1px 0 #a0a0a0, inset -1px -1px 0 #fff;
}
.side-sep { width: 19px; height: 6px; margin-left: 2px; flex: none; background: linear-gradient(#b0b0b0, #b0b0b0) center / 100% 1px no-repeat; }
.sic { width: 23px; height: 22px; }
.fly { fill: #000; }
.hatch { stroke: #000; stroke-dasharray: 1 1; fill: none; shape-rendering: crispEdges; }

.canvas { flex: 1; min-width: 0; background: #fff; overflow: hidden; }
.sheet { shape-rendering: crispEdges; }
.ln { fill: none; stroke: #000; stroke-width: 1; }
.ln-amber { stroke: #e8b060; }
.ruler text { font: bold 5.500px "Liberation Sans", sans-serif; fill: #333; }
.ruler .ruler-big { font-size: 7px; font-weight: normal; }
.tb-black rect { fill: #000; }
.tb-black .tb-hollow { fill: #fff; stroke: #000; stroke-width: 1; }
.tb-red { fill: #f01818; }
.tb-dark { fill: #222; }
.tb-navy { fill: #202060; }
.tb-cn { font: bold 4px "Noto Sans CJK SC", sans-serif; }
.tb-cn2 { font: bold 5.500px "Noto Sans CJK SC", sans-serif; }
.tb-en { font: 6px "Liberation Sans", sans-serif; }
.tb-co { font: bold 6px "Liberation Sans", sans-serif; }
.tb-co2 { font: bold 5px "Liberation Sans", sans-serif; }

/* tab strip */
.tabstrip { height: 17px; flex: none; display: flex; background: #f0f0f0; border-bottom: 1px solid #a0a0a0; }
.tab-spacer { width: 31px; flex: none; border-right: 2px solid #a8a8a8; }
.tab-nav { width: 16px; height: 16px; flex: none; border: 1px solid #b0b0b0; background: #f0f0f0; }
.tab-area { width: 80px; flex: none; position: relative; height: 16px; }
.tab-shape { position: absolute; left: 1px; top: 0; }
.tab-label { position: absolute; left: 13px; top: 0; font: 11.500px/15px "Liberation Serif", serif; letter-spacing: .5px; color: #000; }
.tab-fill { flex: 1; height: 16px; background: #c0c0c0; border-top: 1px solid #202020; }
.tab-split { width: 5px; flex: none; height: 16px; background: #fff; border-left: 1px solid #000; }
.sb-btn { width: 16px; height: 16px; flex: none; background: #f0f0f0; border: 1px solid #fff; border-right-color: #808080; border-bottom-color: #808080; }
.sb-track {
  width: 187px;
  height: 16px;
  flex: none;
  display: flex;
  justify-content: flex-end;
  background: repeating-conic-gradient(#ffffff 0 25%, #ececec 0 50%) 0 0 / 2px 2px;
}
.sb-thumb { width: 17px; height: 16px; background: #f0f0f0; border: 1px solid #fff; border-right-color: #a0a0a0; border-bottom-color: #a0a0a0; }

/* status bar */
.statusbar { height: 5px; flex: none; display: flex; justify-content: flex-end; gap: 3px; background: #f0f0f0; padding-top: 3px; }
.st-panel { border-top: 1px solid #a0a0a0; border-left: 1px solid #a0a0a0; border-right: 1px solid #a0a0a0; height: 4px; }
.st-a { width: 237px; }
.st-b { width: 28px; }
.st-c { width: 36px; }
.st-d { width: 36px; }
```
